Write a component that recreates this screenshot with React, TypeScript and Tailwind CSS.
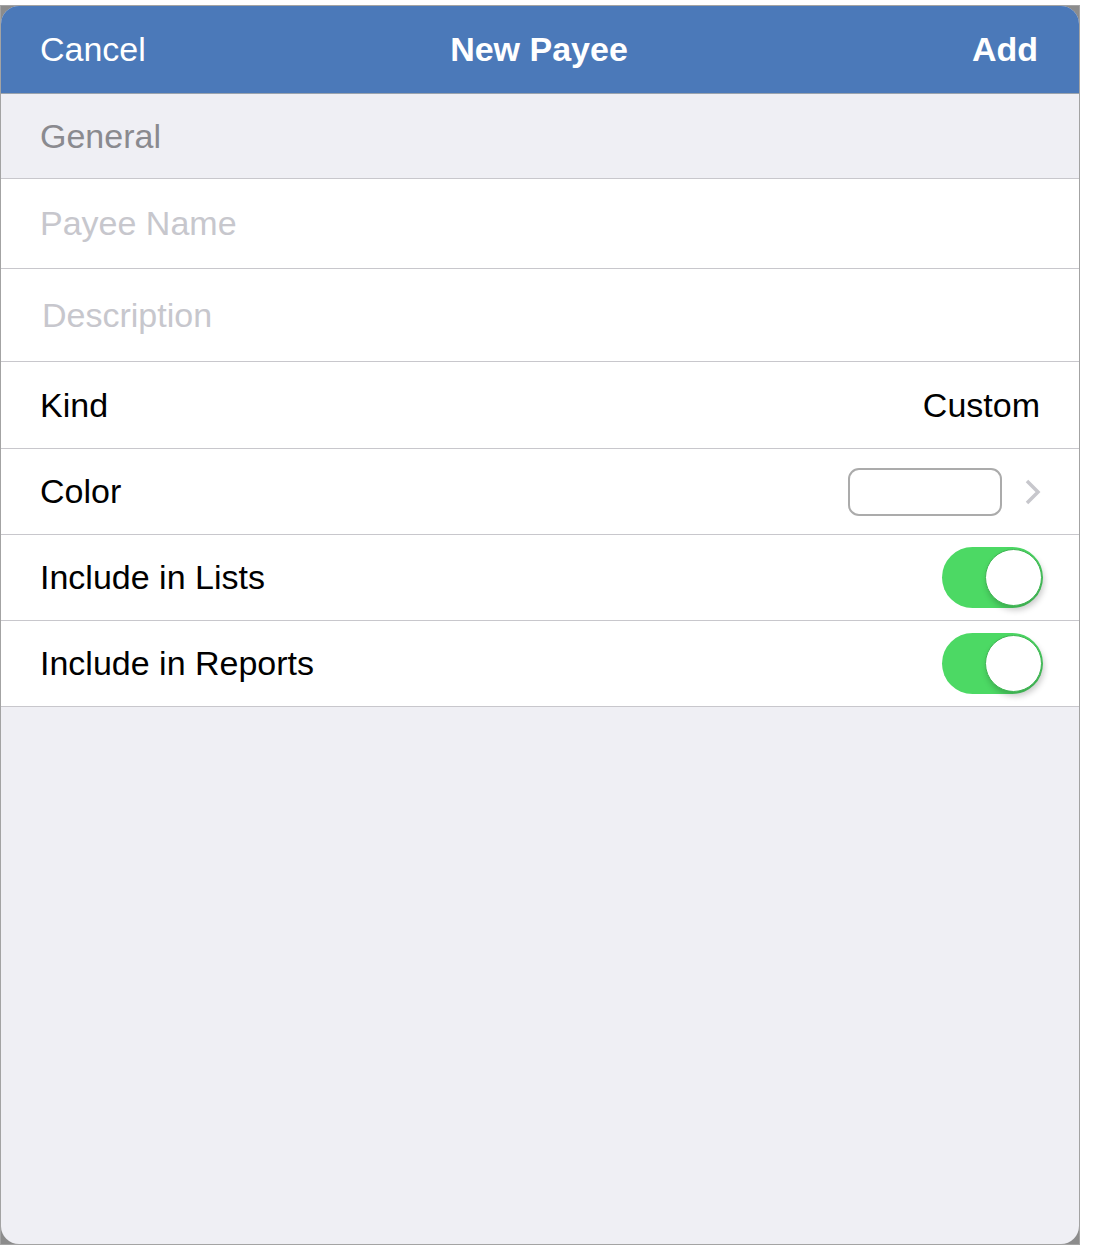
import React from "react";

function Toggle() {
  return (
    <div className="relative w-[101px] h-[61px] rounded-full bg-[#4cd964]">
      <div className="absolute top-[2px] right-[1px] w-[57px] h-[57px] rounded-full bg-white border border-[#3fb553] shadow-[2px_4px_6px_rgba(0,0,0,0.22)]" />
    </div>
  );
}

export default function App() {
  return (
    <div
      className="w-[1100px] h-[1250px] bg-white pt-[5px]"
      style={{ fontFamily: '"Liberation Sans", Arial, sans-serif' }}
    >
      <div className="w-[1080px] h-[1240px] bg-[#8c8c8c] border border-[#a3a3a3]">
        <div className="w-full h-full rounded-[18px] overflow-hidden bg-[#efeff4] flex flex-col">
          <div className="h-[88px] shrink-0 bg-[#4b79b9] border-b border-[#9aa3ad] grid grid-cols-3 items-center pl-[39px] pr-[41px] text-white text-[34px]">
            <span>Cancel</span>
            <span className="font-bold text-center">New Payee</span>
            <span className="font-bold text-right">Add</span>
          </div>
          <div className="h-[85px] shrink-0 border-b border-[#c8c7cc] flex items-center pl-[39px] text-[34px] text-[#8a8a8f]">
            General
          </div>
          <div className="h-[90px] shrink-0 bg-white border-b border-[#c8c7cc] flex items-center pl-[39px] text-[34px] text-[#c7c7cd]">
            Payee Name
          </div>
          <div className="h-[93px] shrink-0 bg-white border-b border-[#c8c7cc] flex items-center pl-[41px] text-[34px] text-[#c7c7cd]">
            Description
          </div>
          <div className="h-[87px] shrink-0 bg-white border-b border-[#c8c7cc] flex items-center justify-between pl-[39px] pr-[39px] text-[34px] text-black">
            <span>Kind</span>
            <span>Custom</span>
          </div>
          <div className="h-[86px] shrink-0 bg-white border-b border-[#c8c7cc] flex items-center justify-between pl-[39px] pr-[37px] text-[34px] text-black">
            <span>Color</span>
            <div className="flex items-center gap-[22px]">
              <div className="w-[154px] h-[48px] rounded-[11px] border-2 border-[#ababab] bg-white" />
              <svg width="18" height="28" viewBox="0 0 18 28" fill="none">
                <path d="M3 3 L14 14 L3 25" stroke="#c7c7cc" strokeWidth="3.5" />
              </svg>
            </div>
          </div>
          <div className="h-[86px] shrink-0 bg-white border-b border-[#c8c7cc] flex items-center justify-between pl-[39px] pr-[36px] text-[34px] text-black">
            <span>Include in Lists</span>
            <Toggle />
          </div>
          <div className="h-[86px] shrink-0 bg-white border-b border-[#c8c7cc] flex items-center justify-between pl-[39px] pr-[36px] text-[34px] text-black">
            <span>Include in Reports</span>
            <Toggle />
          </div>
          <div className="flex-1" />
        </div>
      </div>
    </div>
  );
}
